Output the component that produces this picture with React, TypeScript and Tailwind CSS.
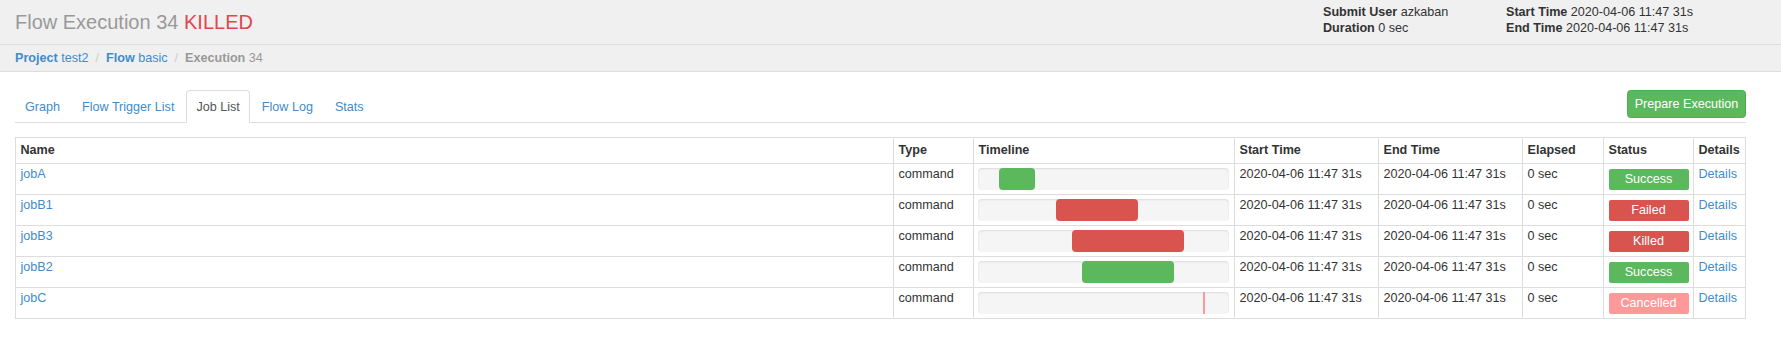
import React from "react";

const jobs = [
  { name: "jobA", left: 21, width: 36, fill: "bg-[#5cb85c]", status: "Success", badge: "bg-[#5cb85c]" },
  { name: "jobB1", left: 78, width: 82, fill: "bg-[#d9534f]", status: "Failed", badge: "bg-[#d9534f]" },
  { name: "jobB3", left: 94, width: 112, fill: "bg-[#d9534f]", status: "Killed", badge: "bg-[#d9534f]" },
  { name: "jobB2", left: 104, width: 92, fill: "bg-[#5cb85c]", status: "Success", badge: "bg-[#5cb85c]" },
  { name: "jobC", left: 225, width: 2, fill: "bg-[#ff9999]", status: "Cancelled", badge: "bg-[#ff9999]" },
];

const tabs = ["Graph", "Flow Trigger List", "Job List", "Flow Log", "Stats"];

const columns = [
  { label: "Name", w: "w-[878px]" },
  { label: "Type", w: "w-[80px]" },
  { label: "Timeline", w: "w-[261px]" },
  { label: "Start Time", w: "w-[144px]" },
  { label: "End Time", w: "w-[144px]" },
  { label: "Elapsed", w: "w-[81px]" },
  { label: "Status", w: "w-[90px]" },
  { label: "Details", w: "w-[52px]" },
];

// body text cells sit a little high in the row, like the original
const cell = "px-[4.5px] pt-[3px] pb-[4px] leading-[15px] align-top border border-[#dddddd]";

function Header() {
  return (
    <div className="h-[45px] bg-[#f0f0f0] border-b border-[#dddddd] flex pl-[15px] pr-[35px]">
      <h1 className="pt-[10px] text-[20px] leading-[24px] text-[#999999]">
        Flow Execution 34 <span className="text-[#e0474c]">KILLED</span>
      </h1>
      <div className="ml-auto flex pt-[4px] leading-[16px]">
        <div className="w-[183px]">
          <div>
            <b>Submit User</b> azkaban
          </div>
          <div>
            <b>Duration</b> 0 sec
          </div>
        </div>
        <div className="w-[240px]">
          <div>
            <b>Start Time</b> 2020-04-06 11:47 31s
          </div>
          <div>
            <b>End Time</b> 2020-04-06 11:47 31s
          </div>
        </div>
      </div>
    </div>
  );
}

function Breadcrumb() {
  return (
    <div className="h-[27px] bg-[#f0f0f0] border-b border-[#dddddd] flex items-center pl-[15px]">
      <span className="text-[#428bca]">
        <b>Project</b> test2
      </span>
      <span className="px-[7px] text-[#cccccc]">/</span>
      <span className="text-[#428bca]">
        <b>Flow</b> basic
      </span>
      <span className="px-[7px] text-[#cccccc]">/</span>
      <span className="text-[#999999]">
        <b>Execution</b> 34
      </span>
    </div>
  );
}

function Tabs() {
  return (
    <div className="flex items-start border-b border-[#dddddd]">
      {tabs.map((t) => {
        const active = t === "Job List";
        return (
          <div
            key={t}
            className={
              active
                ? "mr-[2px] mb-[-1px] px-[9px] py-[6.5px] leading-[18px] border border-[#dddddd] border-b-white bg-white rounded-t-[4px] text-[#555555]"
                : "mr-[2px] mb-[-1px] px-[9px] py-[6.5px] leading-[18px] border border-transparent rounded-t-[4px] text-[#428bca]"
            }
          >
            {t}
          </div>
        );
      })}
      <button className="ml-auto h-[28px] w-[119px] bg-[#5cb85c] border border-[#4cae4c] rounded-[3.6px] text-white leading-[18px]">
        Prepare Execution
      </button>
    </div>
  );
}

function JobTable() {
  return (
    <table className="mt-[14px] w-[1730px] table-fixed border-collapse border border-[#dddddd]">
      <thead>
        <tr>
          {columns.map((c) => (
            <th
              key={c.label}
              className={`${c.w} text-left font-bold px-[4.5px] pt-[4px] pb-[4px] leading-[17px] border border-[#dddddd]`}
            >
              {c.label}
            </th>
          ))}
        </tr>
      </thead>
      <tbody>
        {jobs.map((j) => (
          <tr key={j.name}>
            <td className={`${cell} text-[#428bca]`}>{j.name}</td>
            <td className={cell}>command</td>
            <td className="pl-[3.5px] pr-[5px] py-[4px] align-top border border-[#dddddd]">
              <div className="h-[22px] flex bg-[#f5f5f5] rounded-[4px] shadow-[inset_0_1px_2px_rgba(0,0,0,0.1)] overflow-hidden">
                <div
                  className={`${j.fill} h-full ${j.width > 4 ? "rounded-[4px]" : ""}`}
                  style={{ marginLeft: j.left, width: j.width }}
                />
              </div>
            </td>
            <td className={cell}>2020-04-06 11:47 31s</td>
            <td className={cell}>2020-04-06 11:47 31s</td>
            <td className={cell}>0 sec</td>
            <td className="px-[4.5px] py-[4px] align-top border border-[#dddddd]">
              <div
                className={`${j.badge} mt-[1px] w-[80px] h-[21px] leading-[21px] rounded-[2px] text-white text-center`}
              >
                {j.status}
              </div>
            </td>
            <td className={`${cell} text-[#428bca]`}>Details</td>
          </tr>
        ))}
      </tbody>
    </table>
  );
}

export default function App() {
  return (
    <div className="w-[1781px] h-[348px] bg-white text-[#333333] text-[12.6px] font-['Liberation_Sans',Arial,sans-serif]">
      <Header />
      <Breadcrumb />
      <div className="pl-[15px] pr-[35px] pt-[18px]">
        <Tabs />
        <JobTable />
      </div>
    </div>
  );
}
